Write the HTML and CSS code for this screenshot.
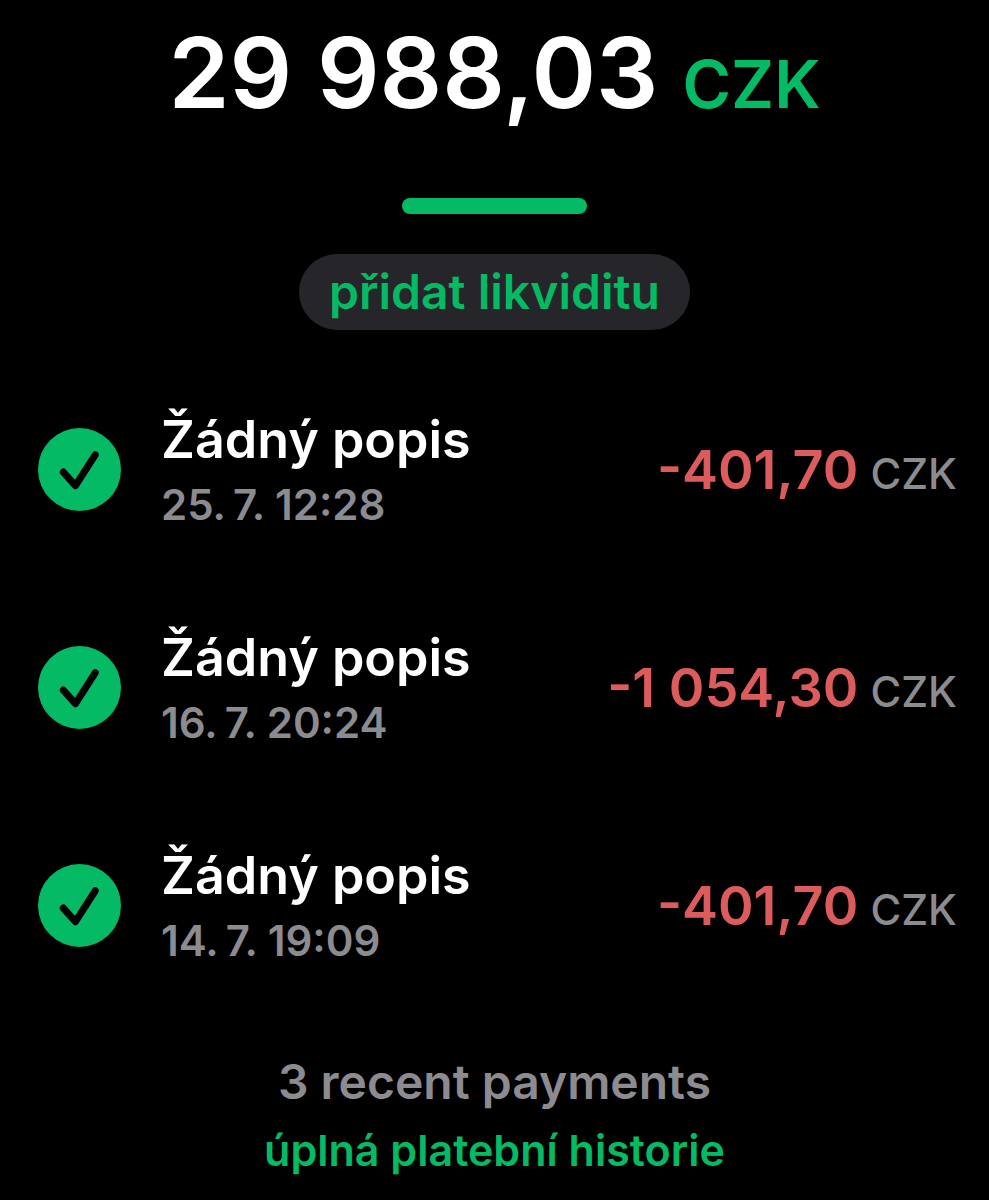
FILE: index.html
```html
<!DOCTYPE html>
<html lang="cs">
<head>
  <meta charset="UTF-8" />
  <meta name="viewport" content="width=device-width, initial-scale=1" />
  <title>Platby</title>
  <link rel="stylesheet" href="styles.css">
</head>
<body>
  <header class="balance">
    <h1 class="total"><span class="total-value">29 988,03</span> <span class="total-currency">CZK</span></h1>
    <div class="divider"></div>
    <button type="button" class="add-btn">přidat likviditu</button>
  </header>

  <ul class="payments">
    <li class="payment">
      <svg class="check" viewBox="0 0 82 82" aria-hidden="true">
        <circle cx="41" cy="41" r="41" />
        <path d="M25 43.5 L37 57 L56.5 26.5" />
      </svg>
      <div class="info">
        <div class="name">Žádný popis</div>
        <div class="date">25.&thinsp;7. 12:28</div>
      </div>
      <div class="amount"><span class="value">-401,70</span><span class="currency">CZK</span></div>
    </li>
    <li class="payment">
      <svg class="check" viewBox="0 0 82 82" aria-hidden="true">
        <circle cx="41" cy="41" r="41" />
        <path d="M25 43.5 L37 57 L56.5 26.5" />
      </svg>
      <div class="info">
        <div class="name">Žádný popis</div>
        <div class="date">16.&thinsp;7. 20:24</div>
      </div>
      <div class="amount"><span class="value">-1 054,30</span><span class="currency">CZK</span></div>
    </li>
    <li class="payment">
      <svg class="check" viewBox="0 0 82 82" aria-hidden="true">
        <circle cx="41" cy="41" r="41" />
        <path d="M25 43.5 L37 57 L56.5 26.5" />
      </svg>
      <div class="info">
        <div class="name">Žádný popis</div>
        <div class="date">14.&thinsp;7. 19:09</div>
      </div>
      <div class="amount"><span class="value">-401,70</span><span class="currency">CZK</span></div>
    </li>
  </ul>

  <footer class="footer">
    <p>3 recent payments</p>
    <a href="#">úplná platební historie</a>
  </footer>
</body>
</html>
```

FILE: styles.css
```css
* {
  box-sizing: border-box;
}
body {
  margin: 0;
  background: #000;
  color: #fff;
  font-family: Inter, "Liberation Sans", sans-serif;
  font-weight: 600;
}
.balance {
  display: flex;
  flex-direction: column;
  align-items: center;
  padding-top: 13px;
}
.total {
  display: flex;
  align-items: baseline;
  gap: 24px;
  margin: 0;
  line-height: 120px;
  font-weight: 600;
}
.total-value {
  font-size: 98px;
}
.total-currency {
  font-size: 66px;
  color: #04ba64;
}
.divider {
  width: 185px;
  height: 16px;
  margin: 54px 0 40px;
  border-radius: 8px;
  background: #04ba64;
}
.add-btn {
  height: 76px;
  padding: 0 30px 2px;
  border: none;
  border-radius: 38px;
  background: #26262a;
  color: #04ba64;
  font: inherit;
  font-size: 48px;
  cursor: pointer;
}
.payments {
  margin: 30px 0 0;
  padding: 0;
  list-style: none;
}
.payment {
  display: flex;
  align-items: center;
  height: 218px;
  padding: 0 32px 0 38px;
}
.check {
  flex: none;
  width: 83px;
  height: 83px;
  margin-right: 40px;
}
.check circle {
  fill: #04ba64;
}
.check path {
  fill: none;
  stroke: #000;
  stroke-width: 7;
  stroke-linecap: round;
  stroke-linejoin: round;
}
.info {
  flex: 1;
  padding-top: 4px;
}
.name {
  font-size: 52px;
  line-height: 68px;
}
.date {
  font-size: 42px;
  line-height: 62px;
  color: #8c8b90;
}
.amount {
  display: flex;
  align-items: baseline;
  gap: 12px;
  white-space: nowrap;
}
.value {
  font-size: 54px;
  color: #dc5c5e;
}
.currency {
  font-size: 42px;
  font-weight: 500;
  color: #8c8b90;
}
.footer {
  margin-top: 34px;
  text-align: center;
}
.footer p {
  margin: 0;
  font-size: 48px;
  line-height: 68px;
  color: #8c8b90;
}
.footer a {
  font-size: 43px;
  line-height: 68px;
  color: #04ba64;
  text-decoration: none;
}
```
